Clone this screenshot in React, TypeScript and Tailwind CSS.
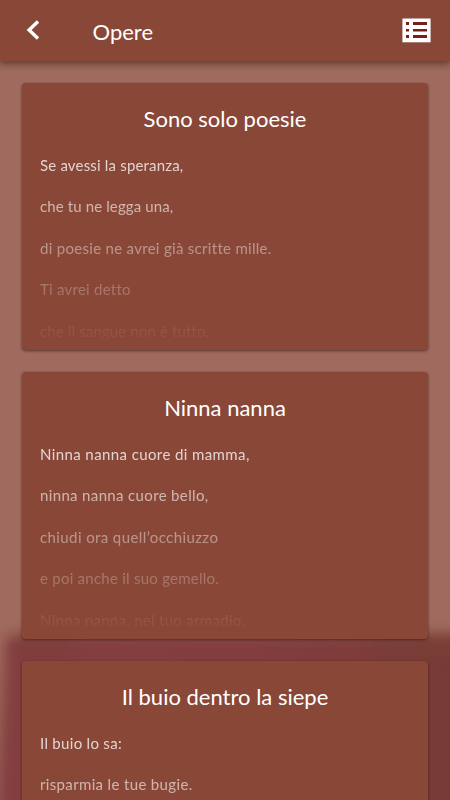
import React from "react";

const poems = [
  {
    title: "Sono solo poesie",
    lines: [
      { text: "Se avessi la speranza,", tracking: "tracking-[0.18px]" },
      { text: "che tu ne legga una,", tracking: "tracking-[0.12px]" },
      { text: "di poesie ne avrei già scritte mille.", tracking: "tracking-[0.3px]" },
      { text: "Ti avrei detto", tracking: "tracking-[0.25px]" },
      { text: "che il sangue non è tutto,", tracking: "tracking-[0.13px]" },
    ],
  },
  {
    title: "Ninna nanna",
    lines: [
      { text: "Ninna nanna cuore di mamma,", tracking: "tracking-[0.4px]" },
      { text: "ninna nanna cuore bello,", tracking: "tracking-[0.35px]" },
      { text: "chiudi ora quell’occhiuzzo", tracking: "tracking-[0.4px]" },
      { text: "e poi anche il suo gemello.", tracking: "tracking-[0.25px]" },
      { text: "Ninna nanna, nel tuo armadio,", tracking: "tracking-[0.3px]" },
    ],
  },
  {
    title: "Il buio dentro la siepe",
    lines: [
      { text: "Il buio lo sa:", tracking: "tracking-[0.3px]" },
      { text: "risparmia le tue bugie.", tracking: "tracking-[0.35px]" },
    ],
  },
];

const Header = () => {
  return (
    <header className="relative z-10 flex h-[61px] shrink-0 items-center bg-[#894737] shadow-[0_2px_7px_1px_rgba(50,20,15,0.55)]">
      <svg width="14" height="20" viewBox="0 0 14 20" className="mb-[1px] ml-[26px]" fill="none">
        <path d="M12 1.5 L3.1 10 L12 18.5" stroke="white" strokeWidth="3.4" />
      </svg>
      <h1 className="mt-[2px] ml-[52.5px] text-[22px] leading-[30px] text-white">Opere</h1>
      <svg
        width="29"
        height="25"
        viewBox="0 0 29 25"
        className="mr-[19px] ml-auto"
      >
        <path fill="#fff" d="M0.4 0.5h28.2v23.8H0.4z" />
        <path
          fill="#792015"
          d="M4 4h3v3H4zM4 11h3v2.6H4zM4 17h3v3H4zM11 4h14v3H11zM11 11h14v2.6H11zM11 17h14v3H11z"
        />
      </svg>
    </header>
  );
};

// blurred shapes showing behind the list
const Backdrop = () => {
  return (
    <div className="absolute inset-0 overflow-hidden bg-[#9f6b5e]">
      <div className="absolute top-[635px] left-[0px] h-[220px] w-[490px] -skew-x-3 rounded-tl-[8px] bg-linear-to-r from-[#833e3f] via-[#823d3e] to-[#773a34] blur-[7px]" />
      <div className="absolute top-[640px] left-[14px] h-[16px] w-[60px] bg-[#7b3e37]/60 blur-[7px]" />
      <div className="absolute top-[638px] left-[380px] h-[18px] w-[80px] bg-[#7a4037]/60 blur-[6px]" />
    </div>
  );
};

const App = () => {
  return (
    <div className="relative flex h-[800px] w-[450px] flex-col overflow-hidden font-['Lato',sans-serif]">
      <Backdrop />
      <Header />
      <main className="relative flex flex-col gap-[22px] px-[22px] pt-[22px]">
        {poems.map((poem) => (
          <article
            key={poem.title}
            className="h-[267px] shrink-0 overflow-hidden rounded-[4px] bg-[#894737] px-[18px] pt-[21px] shadow-[0_1px_3px_rgba(50,20,20,0.65)]"
          >
            <h2 className="text-center text-[22px] leading-[30px] text-white">{poem.title}</h2>
            <div className="mt-[10.6px] h-[205px] mask-[linear-gradient(to_bottom,rgba(0,0,0,0.85),transparent)]">
              {poem.lines.map((line) => (
                <p
                  key={line.text}
                  className={`h-[41.5px] text-[15px] leading-[41.5px] text-white ${line.tracking}`}
                >
                  {line.text}
                </p>
              ))}
            </div>
          </article>
        ))}
      </main>
    </div>
  );
};

export default App;
